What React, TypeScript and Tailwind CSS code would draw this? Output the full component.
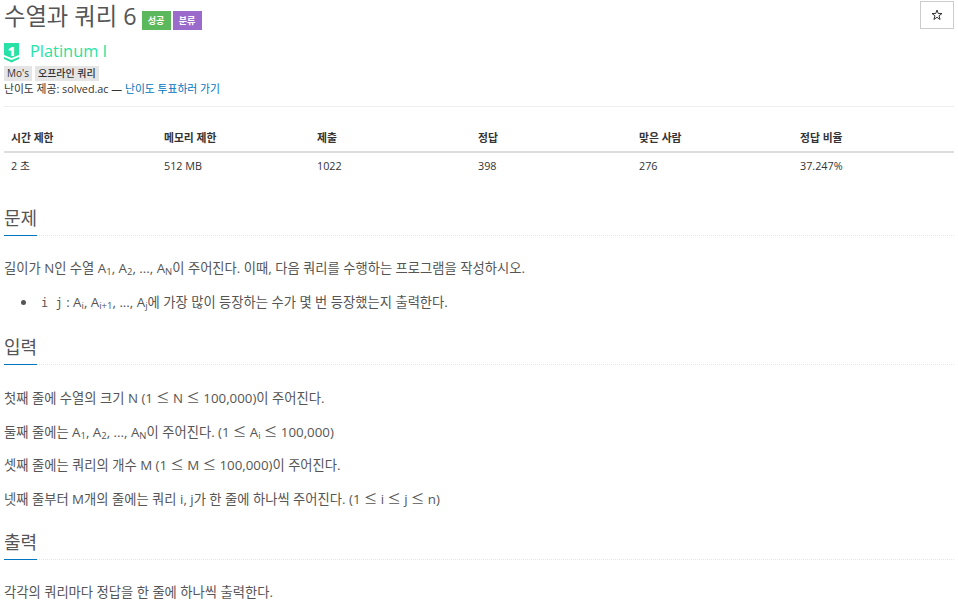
const font = { fontFamily: '"Open Sans", "Noto Sans CJK KR", sans-serif' };

function Sub({ children }: { children: string }) {
  return <span className="text-[9.5px] leading-none align-[-2px]">{children}</span>;
}

// the reference's ≤ is much wider than the Open Sans one
function Le() {
  return <span style={{ fontFamily: '"Noto Sans CJK KR", sans-serif' }}>≤</span>;
}

function SectionTitle({ title }: { title: string }) {
  return (
    <div className="flex border-b border-dotted border-[#e5e5e5] h-[31px] mb-[24px]">
      <h2 className="h-[31px] w-[33px] border-b border-[#0076c0] text-[18px] leading-[26px] font-normal text-[#555] whitespace-nowrap">
        {title}
      </h2>
    </div>
  );
}

const headers = ['시간 제한', '메모리 제한', '제출', '정답', '맞은 사람', '정답 비율'];
const values = ['2 초', '512 MB', '1022', '398', '276', '37.247%'];
const widths = ['w-[153px]', 'w-[153px]', 'w-[161px]', 'w-[161px]', 'w-[161px]', 'w-[161px]'];

export default function App() {
  return (
    <div className="w-[958px] h-[605px] overflow-hidden bg-white pl-1 pr-1 text-[#333]" style={font}>
      <div className="flex items-start justify-between h-[32px]">
        <div className="flex items-center h-[32px]">
          <h1 className="text-[23.3px] leading-[30px] font-normal text-[#555]">수열과 쿼리 6</h1>
          <span className="ml-[5px] mt-[9px] w-[29px] h-[19px] flex items-center justify-center bg-[#5cb85c] text-white text-[9px] font-bold">성공</span>
          <span className="ml-[2px] mt-[9px] w-[29px] h-[19px] flex items-center justify-center bg-[#9b6bcc] text-white text-[9px] font-bold">분류</span>
        </div>
        <button className="w-[34px] h-[28px] mt-px border border-[#ccc] flex items-center justify-center">
          <svg width="12" height="12" viewBox="0 0 12 12">
            <path d="M6 1L7.300 4.500H11L8 6.800L9.100 10.500L6 8.300L2.900 10.500L4 6.800L1 4.500H4.700Z" fill="none" stroke="#333" strokeWidth="1" />
          </svg>
        </button>
      </div>

      <div className="flex items-center h-[24px] mt-[7px]">
        <svg width="16" height="20" viewBox="0 0 16 20" className="mr-[10px] mt-[3px] overflow-visible">
          <path d="M0 0H15V12L7.5 15L0 12Z" fill="#27e2a4" />
          <path d="M0 14L7.5 17L15 14V16L7.5 19.500L0 16Z" fill="#27e2a4" />
          <text x="7.5" y="12.500" textAnchor="middle" fontSize="13" fontWeight="800" fill="#fff">1</text>
        </svg>
        <span className="text-[16.4px] leading-[24px] text-[#27e2a4]">Platinum I</span>
      </div>

      <div className="flex gap-[3px] mt-[3px] h-[15px]">
        <span className="px-[3px] bg-[#e5e5e5] text-[10px] leading-[15px] text-[#333]">Mo's</span>
        <span className="px-[3px] bg-[#e5e5e5] text-[10px] leading-[15px] font-medium text-[#333]">오프라인 쿼리</span>
      </div>

      <p className="text-[10.8px] leading-[14px] mt-[1px] text-[#333]">
        난이도 제공: solved.ac — <span className="text-[#0076c0]">난이도 투표하러 가기</span>
      </p>

      <div className="border-t border-[#eee] mt-[10px] mb-[19px]" />

      <table className="table-fixed w-[950px] text-[10.8px] text-[#333] border-collapse">
        <thead>
          <tr className="border-b-2 border-[#ddd] h-[26px]">
            {headers.map((h, i) => (
              <th key={h} className={`${widths[i]} px-[7px] text-left font-bold`}>{h}</th>
            ))}
          </tr>
        </thead>
        <tbody>
          <tr className="h-[27px]">
            {values.map((v) => (
              <td key={v} className="px-[7px]">{v}</td>
            ))}
          </tr>
        </tbody>
      </table>

      <div className="mt-[26px]">
        <SectionTitle title="문제" />
        <p className="h-[17px] text-[13.3px] leading-[17px] text-[#555]">
          길이가 N인 수열 A<Sub>1</Sub>, A<Sub>2</Sub>, ..., A<Sub>N</Sub>이 주어진다. 이때, 다음 쿼리를 수행하는 프로그램을 작성하시오.
        </p>
        <ul className="mt-[17px] text-[13.3px] leading-[17px] text-[#555]">
          <li className="h-[17px] flex items-center">
            <span className="w-[5px] h-[5px] rounded-full bg-[#555] ml-[17px] mr-[15px] shrink-0" />
            <span>
              <code className="text-[12px]" style={{ fontFamily: '"DejaVu Sans Mono", monospace' }}>i j</code> : A<Sub>i</Sub>, A<Sub>i+1</Sub>, ..., A<Sub>j</Sub>에 가장 많이 등장하는 수가 몇 번 등장했는지 출력한다.
            </span>
          </li>
        </ul>
      </div>

      <div className="mt-[23px]">
        <SectionTitle title="입력" />
        <div className="flex flex-col gap-[16.500px] text-[13.3px] leading-[17px] text-[#555]">
          <p className="h-[17px]">첫째 줄에 수열의 크기 N (1 <Le /> N <Le /> 100,000)이 주어진다.</p>
          <p className="h-[17px]">둘째 줄에는 A<Sub>1</Sub>, A<Sub>2</Sub>, ..., A<Sub>N</Sub>이 주어진다. (1 <Le /> A<Sub>i</Sub> <Le /> 100,000)</p>
          <p className="h-[17px]">셋째 줄에는 쿼리의 개수 M (1 <Le /> M <Le /> 100,000)이 주어진다.</p>
          <p className="h-[17px]">넷째 줄부터 M개의 줄에는 쿼리 i, j가 한 줄에 하나씩 주어진다. (1 <Le /> i <Le /> j <Le /> n)</p>
        </div>
      </div>

      <div className="mt-[22px]">
        <SectionTitle title="출력" />
        <p className="h-[17px] text-[13.3px] leading-[17px] text-[#555]">각각의 쿼리마다 정답을 한 줄에 하나씩 출력한다.</p>
      </div>
    </div>
  );
}
